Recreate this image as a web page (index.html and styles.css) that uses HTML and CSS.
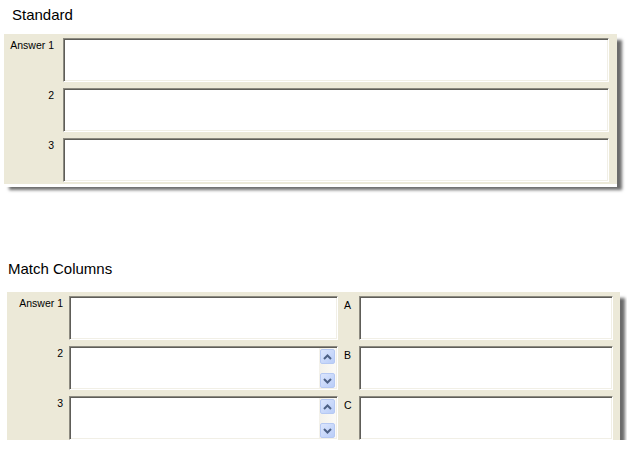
FILE: index.html
```html
<!DOCTYPE html>
<html>
<head>
<meta charset="utf-8">
<link rel="stylesheet" href="styles.css">
</head>
<body>
<section class="group group-std">
  <h2 class="title title-std">Standard</h2>
  <div class="panel panel-std">
    <div class="lbl">Answer 1</div><div class="field"></div>
    <div class="lbl">2</div><div class="field"></div>
    <div class="lbl">3</div><div class="field"></div>
  </div>
</section>
<section class="group group-match">
  <h2 class="title title-match">Match Columns</h2>
  <div class="panel panel-match">
    <div class="lbl">Answer 1</div><div class="field"></div>
    <div class="lbl2">A</div><div class="field"></div>

    <div class="lbl">2</div>
    <div class="field field-scroll">
      <div class="sbar">
        <div class="sbtn"><svg width="9" height="6" viewBox="0 0 9 6"><polyline points="1,5 4.5,1.5 8,5" fill="none" stroke="#4d6185" stroke-width="2"/></svg></div>
        <div class="sbtn"><svg width="9" height="6" viewBox="0 0 9 6"><polyline points="1,1 4.5,4.5 8,1" fill="none" stroke="#4d6185" stroke-width="2"/></svg></div>
      </div>
    </div>
    <div class="lbl2">B</div><div class="field"></div>

    <div class="lbl">3</div>
    <div class="field field-scroll">
      <div class="sbar">
        <div class="sbtn"><svg width="9" height="6" viewBox="0 0 9 6"><polyline points="1,5 4.5,1.5 8,5" fill="none" stroke="#4d6185" stroke-width="2"/></svg></div>
        <div class="sbtn"><svg width="9" height="6" viewBox="0 0 9 6"><polyline points="1,1 4.5,4.5 8,1" fill="none" stroke="#4d6185" stroke-width="2"/></svg></div>
      </div>
    </div>
    <div class="lbl2">C</div><div class="field"></div>
  </div>
</section>
</body>
</html>
```
FILE: styles.css
```css
html, body {
  margin: 0;
  padding: 0;
  background: #ffffff;
  font-family: "Liberation Sans", Arial, sans-serif;
  color: #000;
}
.group { display: block; }
.title {
  margin: 0;
  font-weight: normal;
  font-size: 15px;
  line-height: 17px;
  height: 17px;
}
.title-std { padding: 6px 0 0 12px; }
.title-match { padding: 0 0 0 8px; margin-top: 76px; }

.panel {
  background: #ece9d8;
  box-shadow: 0 3px 0 #ffffff, 5px 6px 3px rgba(0, 0, 0, 0.58);
  display: grid;
  row-gap: 6px;
  box-sizing: border-box;
  width: 613px;
}
.panel-std {
  margin: 11px 0 0 4px;
  padding: 4px 8px 2px 0;
  grid-template-columns: 59px 546px;
}
.panel-match {
  margin: 15px 0 0 7px;
  padding: 4px 7px 0 0;
  grid-template-columns: 62px 269px 21px 254px;
}
.lbl, .lbl2 {
  font-size: 10.5px;
  line-height: 12px;
}
.lbl {
  text-align: right;
  padding-right: 9px;
  padding-top: 1px;
}
.panel-match .lbl { padding-right: 6px; }
.lbl2 {
  padding-left: 6px;
  padding-top: 3px;
}
.field {
  height: 44px;
  box-sizing: border-box;
  background: #ffffff;
  border-style: solid;
  border-width: 1px;
  border-color: #8c8a80 #ffffff #ffffff #8c8a80;
  box-shadow: inset 1px 1px 0 #5e5d58, inset -1px -1px 0 #f1efe6;
  display: flex;
  justify-content: flex-end;
}
.sbar {
  width: 17px;
  margin: 1px 1px 1px 0;
  background: linear-gradient(to right, #f3f1ea, #fbfaf7);
  display: flex;
  flex-direction: column;
  justify-content: space-between;
  align-items: center;
  padding: 1px 0 0 0;
  box-sizing: border-box;
}
.sbtn {
  width: 15px;
  height: 15px;
  box-sizing: border-box;
  border: 1px solid #b6c9f3;
  border-radius: 2px;
  background: linear-gradient(135deg, #dce6fd, #b9cdf8);
  display: flex;
  align-items: center;
  justify-content: center;
}
.sbtn svg { display: block; }
```
